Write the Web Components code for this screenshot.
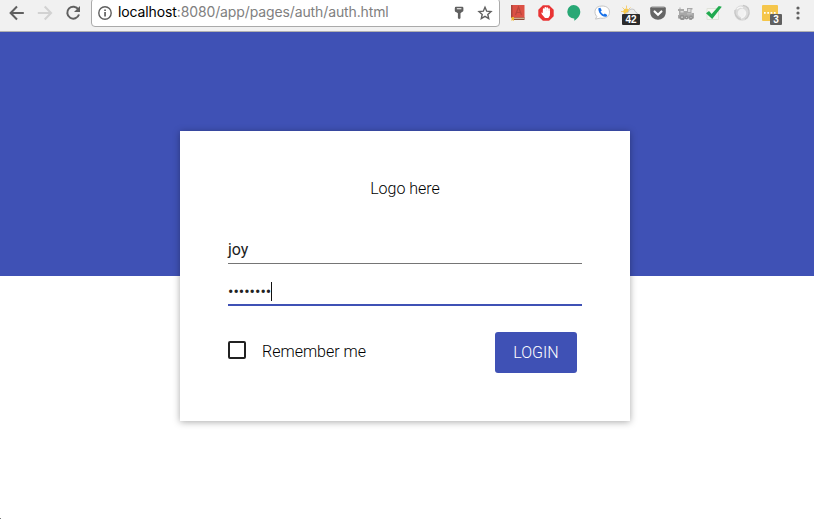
<!DOCTYPE html>
<html lang="en">
<head>
<meta charset="utf-8">
<title>Login</title>
<style>
html,body{margin:0;height:100%;overflow:hidden;background:#fff}
body{font-family:Roboto,sans-serif}
</style>
</head>
<body>
<auth-window></auth-window>
<script>
const define = (name, css, html) => customElements.define(name, class extends HTMLElement {
  constructor() {
    super();
    const t = document.createElement('template');
    t.innerHTML = `<style>*{box-sizing:border-box}${css}</style>${html}`;
    this.attachShadow({mode: 'open'}).append(t.content.cloneNode(true));
  }
});

define('address-bar', `
:host{display:flex;align-items:center;box-sizing:border-box;width:409px;height:29px;margin-top:-2px;background:#fff;border:1px solid #aaa;border-radius:4px;padding:1px 6px 0 5px}
.info{flex:none;margin-right:5px}
.url{white-space:pre;color:#808080;flex:1;font:14px/18px Inter,sans-serif;letter-spacing:-.12px;padding-bottom:2px}
b{font-weight:400;color:#000}
svg{display:block;flex:none}`, `
<svg class="info" width="16" height="16" viewBox="0 0 16 16"><circle cx="8" cy="8" r="6.2" fill="none" stroke="#5f5f5f" stroke-width="1.4"/><path d="M7.2 4.4h1.7v1.7H7.2zM7.2 7h1.7v4.6H7.2z" fill="#5f5f5f"/></svg>
<span class="url"><b>localhost</b>:8080/app/pages/auth/auth.html</span>
<svg width="12" height="16" viewBox="0 0 12 16" style="margin-right:12px"><path fill="#606060" fill-rule="evenodd" d="M3 1.8h6.2Q10.4 1.8 10.4 3v2.6Q10.4 7 9 7L7.5 8.3v5L6 14.2 4.9 13V8.3L3 7Q1.8 7 1.8 5.8V3.2Q1.8 1.8 3 1.8zM3.8 3.2v1h4.6v-1z"/></svg>
<svg width="16" height="16" viewBox="0 0 16 16"><path fill="none" stroke="#606060" stroke-width="1.4" stroke-linejoin="miter" d="M8 2.3l1.7 3.9 4.3.4-3.2 2.8.9 4.2L8 11.4l-3.7 2.2.9-4.2L2 6.6l4.3-.4z"/></svg>`);

define('nav-icons', `:host{display:block;width:91px;height:26px}svg{display:block}`, `
<svg width="91" height="26" viewBox="0 0 91 26" fill="none" stroke-width="2">
<path stroke="#606060" d="M23.8 13H11.5M17 6.5L10.6 13 17 19.5"/>
<path stroke="#d2d2d2" d="M37.8 13h12.3M44.7 6.5l6.4 6.5-6.4 6.5"/>
<path stroke="#606060" d="M78.4 9.5A6 6 0 1 0 79 14.5"/><path fill="#606060" d="M80 6v6h-6z"/>
</svg>`);

define('count-badge', `:host{position:absolute;display:block;background:#2b2b2b;color:#fff;font:bold 10px/11px "Liberation Sans",sans-serif;text-align:center;border-radius:1px;height:11px}`, `<slot></slot>`);

define('extension-icon', `:host{display:block;position:relative;width:20px;height:26px;flex:none}`, `<slot></slot>`);

define('browser-toolbar', `
:host{display:flex;box-sizing:border-box;height:32px;background:#f1f1f1;border-bottom:1px solid #b1b1b1;overflow:hidden}
.ext{display:flex;gap:8px;margin-left:8px}
svg{display:block}
count-badge.a{left:2px;top:14px;width:18px}
count-badge.b{left:10px;top:14px;width:12px;background:#606060}`, `
<nav-icons></nav-icons><address-bar></address-bar>
<div class="ext">
<extension-icon><svg width="20" height="26"><path fill="#dc5044" d="M4 5h12.5v13H4z"/><path fill="#a7443b" d="M3 5h1.5v13H3z"/><path fill="#8e4b38" d="M6 17.5h10.5V20H6z"/><path fill="#dfc7a7" d="M6 17.8h10v1H6z"/><path fill="#efb42f" d="M3.5 17h2.5v4L4.8 20l-1.3 1z"/><path fill="none" stroke="#b9453b" stroke-width="1.2" d="M7.5 15l3-8 3 8M8.6 12.5h3.8"/></svg></extension-icon>
<extension-icon><svg width="20" height="26"><path fill="#e93434" d="M6.9 5.2h6.2l4.6 4.6v6.4l-4.6 4.6H6.9l-4.6-4.6V9.8z"/><path fill="none" stroke="#fff" stroke-width="1.7" stroke-linecap="round" d="M7.7 13V9.2M9.4 12V7.8M11.2 12V8M13 13V9.2"/><path fill="#fff" d="M6.9 11h7v4.5L12.3 18H9l-3-3.6-.9-1.9 1.8.4z"/></svg></extension-icon>
<extension-icon style="left:-1px"><svg width="20" height="26"><path fill="#28a875" d="M10.6 5a6.7 6.7 0 0 1 6.7 6.7c0 4-2.8 7-6 9v-2.3A6.7 6.7 0 1 1 10.6 5z"/></svg></extension-icon>
<extension-icon><svg width="20" height="26"><path fill="#fff" stroke="#c5c5c5" d="M10 6c5 0 7.5 2.6 7.5 6.2S15 18.3 10 18.3l-1.5-.2-5 1 1.3-2.6C1.5 13 2.2 6 10 6z"/><path fill="#1a72e8" d="M6.4 8.3l2-.6 1.4 2.7-1.2 1.1q1 2 3 3l1.2-1.1 2.5 1.5-.6 1.5Q13 17.4 10 15.7 6 12.7 6.4 8.3z"/></svg></extension-icon>
<extension-icon><svg width="20" height="26"><g stroke="#f2ce78"><path d="M6.5 5.5v3M1 11.5h3M2.5 7.5l2 2M10.5 7.5l-2 2"/></g><circle cx="6.3" cy="11.4" r="2.9" fill="#f8c949"/><path fill="#ececec" stroke="#c5c5c5" d="M5 15.5q0-3 3-3 1-4 4-3.5 3 0 3 2.5 3 1 2.5 4z"/></svg><count-badge class="a">42</count-badge></extension-icon>
<extension-icon><svg width="20" height="26"><path fill="#666" d="M3.5 7h13q1.3 0 1.3 1.3V12c0 10.2-15.6 10.2-15.6 0V8.3Q2.2 7 3.5 7z"/><path fill="#8f8f8f" d="M3.5 6.5h13v1.5h-13z"/><path fill="none" stroke="#fff" stroke-width="2.2" stroke-linecap="round" d="M6.6 11.5L10 14.7l3.4-3.2"/></svg></extension-icon>
<extension-icon><svg width="20" height="26"><path fill="#a8a8a8" d="M2 9h1.5V7.5h1V9H8v2h3V8h5.5v1.5h-1V13H18v5.5h-1.5l-1 1.5h-2l-1-1.5H9L8 20H5.5l-1-1.5H2V15h1v-4H2z"/><path fill="#dadada" d="M12 9h2.5v3H12zM4.5 11h3v1.5h-3z"/><g fill="#929292"><circle cx="6" cy="17.3" r="2.6"/><circle cx="10.5" cy="17.6" r="2"/><circle cx="15" cy="17.6" r="2.1"/></g><path fill="#d0d0d0" d="M5.3 16.5h1.5V18H5.3zM10 17h1v1h-1zM14.5 17h1v1h-1zM11 13.5h5v.8h-5z"/></svg></extension-icon>
<extension-icon><svg width="20" height="26"><path fill="#f4f6f0" stroke="#dfe2da" d="M3 8.5h11.5v11H3z"/><path fill="#20aa4f" d="M2 13.3l3-2.2 2.6 3L14.8 6l3 .7L8.2 19z"/></svg></extension-icon>
<extension-icon><svg width="20" height="26" fill="none"><circle cx="10" cy="13" r="6" stroke="#dadada" stroke-width="3.4"/><path stroke="#f6f6f6" stroke-width="1.3" d="M5 9q3-3 6-1M9 18q5-1 4-6"/><path stroke="#c6c6c6" stroke-width="1.2" d="M11 5.3q7 1 6 8.5-1 4-4 5.5M3 10q-1 7 6 9.5"/></svg></extension-icon>
<extension-icon><svg width="20" height="26"><rect x="2" y="5" width="16" height="16" rx="1" fill="#f5c64b"/><path fill="#fff" d="M4 12h1.7v1.7H4zM7.3 12H9v1.7H7.3zM10.6 12h1.7v1.7h-1.7zM13.9 12h1.7v1.7h-1.7z"/></svg><count-badge class="b">3</count-badge></extension-icon>
<extension-icon><svg width="20" height="26" fill="#606060"><circle cx="10" cy="8" r="1.6"/><circle cx="10" cy="13" r="1.6"/><circle cx="10" cy="18" r="1.6"/></svg></extension-icon>
</div>`);

define('text-field', `
:host{display:flex;align-items:center;box-sizing:border-box;width:354px;height:28px;border-bottom:1px solid #757575;font-size:16px;line-height:20px;color:#212121}
:host([focused]){height:29px;border-bottom:2px solid #3f51b5;margin-top:13px;padding-top:2px}
i{display:none;width:1px;height:19px;background:#111}
:host([focused]) i{display:block}`, `<slot></slot><i></i>`);

define('check-box', `
:host{display:flex;align-items:center;gap:16px;font-size:16px;font-weight:300;line-height:20px;color:#000}
span{display:block;width:18px;height:18px;border:2px solid #212121;border-radius:2px}
div{padding-top:4px;margin-bottom:0}`, `<span></span><div><slot></slot></div>`);

define('raised-button', `
:host{display:flex;align-items:center;justify-content:center;width:82px;height:41px;background:#3f51b5;border-radius:3px;color:#fff;font-size:16px;font-weight:300}`, `<slot></slot>`);

define('login-card', `
:host{display:block;box-sizing:border-box;width:450px;height:290px;padding:48px 48px 0;background:#fff;box-shadow:0 1px 7px rgba(0,0,0,.34)}
.logo{text-align:center;font-size:16px;font-weight:300;line-height:20px;color:#000;margin-bottom:37px}
.row{display:flex;justify-content:space-between;align-items:center;padding-right:5px;margin-top:26px}
check-box{margin-top:-5px}`, `
<div class="logo">Logo here</div>
<text-field>joy</text-field>
<text-field focused>••••••••</text-field>
<div class="row"><check-box>Remember me</check-box><raised-button>LOGIN</raised-button></div>`);

define('auth-window', `
:host{display:block;height:519px;background:#fff;overflow:hidden}
main{display:flex;align-items:flex-start;height:487px;padding:99px 0 0 180px;background:linear-gradient(#777,#777) 0 486px/1px 1px no-repeat,linear-gradient(#3f51b5 244px,#fff 244px)}`, `<browser-toolbar></browser-toolbar><main><login-card></login-card></main>`);
</script>
</body>
</html>
